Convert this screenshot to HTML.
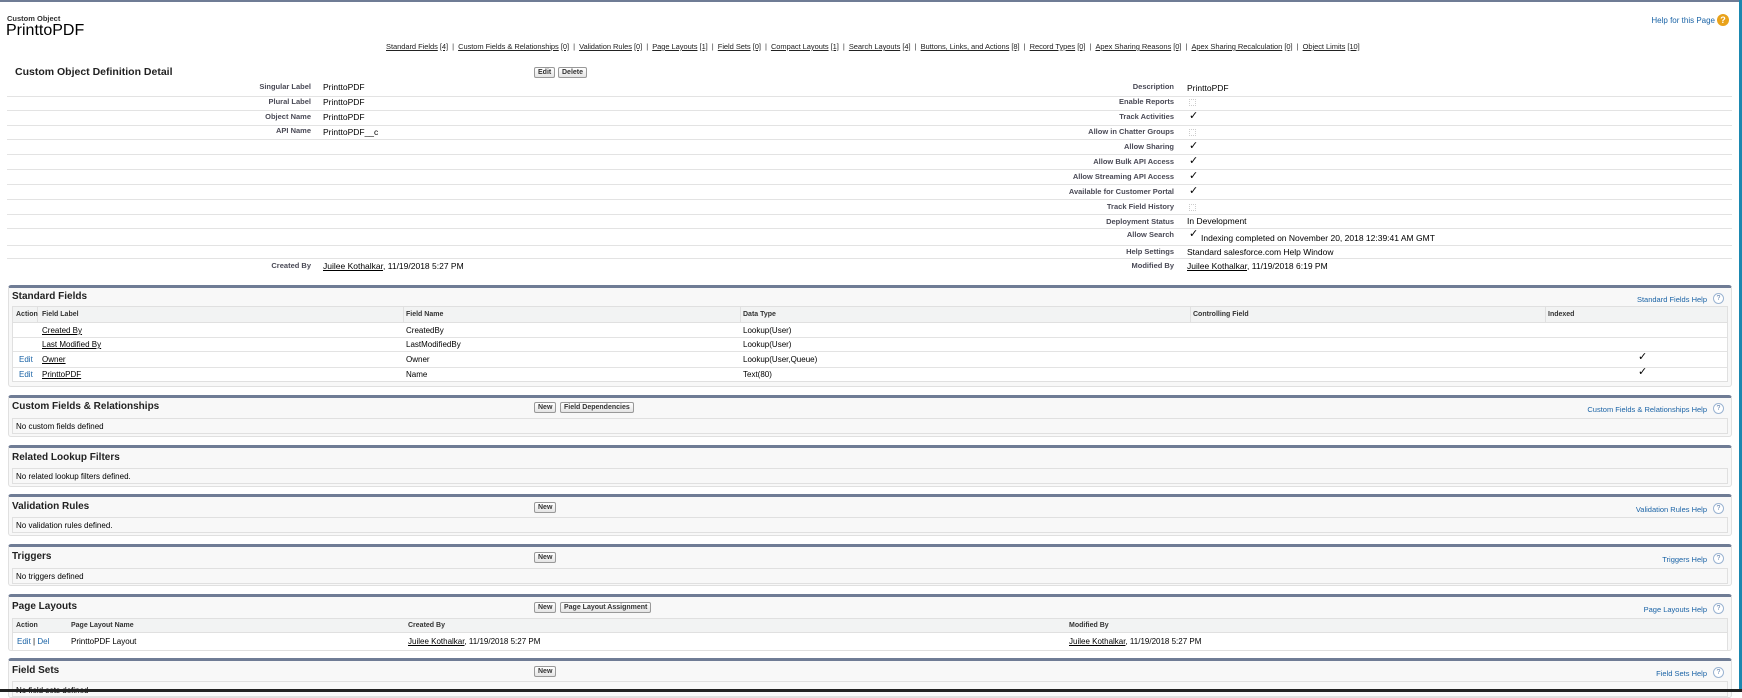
<!DOCTYPE html>
<html><head><meta charset="utf-8"><style>
*{margin:0;padding:0;box-sizing:border-box}
body{width:1742px;height:692px;position:relative;overflow:hidden;background:#fff;font-family:"Liberation Sans",Arial,sans-serif;color:#222;font-size:9px}
.a{position:absolute;white-space:nowrap}
.lbl{position:absolute;font-weight:bold;font-size:7.5px;color:#4a4a56;text-align:right;white-space:nowrap}
.val{position:absolute;font-size:8.5px;color:#000;white-space:nowrap}
.ln{position:absolute;height:1px;background:#e3e3e3}
u{text-decoration:underline}
.nav{position:absolute;top:42px;left:386px;font-size:7.5px;color:#333;white-space:nowrap;letter-spacing:-0.05px}
.nav u{color:#222}
.btn{position:absolute;height:11px;border:1px solid #999;border-radius:2px;background:linear-gradient(#fff,#e4e4e4);font-size:7px;font-weight:bold;color:#333;line-height:9px;padding:0 3px;white-space:nowrap}
.box{position:absolute;left:8px;width:1724px;background:#f8f8f8;border-top:3px solid #6f7c95;border-left:1px solid #e0e0e0;border-right:1px solid #e0e0e0;border-bottom:1px solid #e0e0e0;border-radius:3px}
.title{position:absolute;left:3px;font-weight:bold;font-size:10px;color:#222}
.help{position:absolute;right:24px;font-size:7.5px;color:#1a63a6;white-space:nowrap}
.q{position:absolute;right:7px;width:11px;height:11px;border-radius:50%;border:1px solid #9bb4d2;color:#5a7ba8;font-size:7px;text-align:center;line-height:9px;background:#fff}
.inner{position:absolute;left:3px;right:3px;background:#f8f8f8;border:1px solid #e0e0e0}
.th{position:absolute;font-weight:bold;font-size:7px;color:#333;white-space:nowrap}
.td{position:absolute;font-size:8px;color:#000;white-space:nowrap}
.lk{color:#1a63a6}
.ck{position:absolute;font-size:11px;line-height:11px;color:#000}
.cb{position:absolute;width:7px;height:7px;border:1px dotted #ccc}
</style></head><body>
<div class="a" style="left:0;top:0;width:1742px;height:2px;background:#6f7c95"></div>
<div class="a" style="left:1739px;top:0;width:3px;height:692px;background:#1b88b0"></div>

<div class="a" style="left:7px;top:14px;font-size:7.5px;font-weight:bold;color:#333">Custom Object</div>
<div class="a" style="left:6px;top:22px;font-size:16px;color:#000">PrinttoPDF</div>
<div class="a" style="right:27px;top:16px;font-size:8px;color:#1a63a6">Help for this Page</div>
<div class="a" style="left:1717px;top:14px;width:12px;height:12px;border-radius:50%;background:#e9a21a;color:#fff;font-size:9px;font-weight:bold;text-align:center;line-height:12px">?</div>

<div class="nav"><u>Standard Fields</u> <u>[4]</u> &nbsp;| &nbsp;<u>Custom Fields &amp; Relationships</u> <u>[0]</u> &nbsp;| &nbsp;<u>Validation Rules</u> <u>[0]</u> &nbsp;| &nbsp;<u>Page Layouts</u> <u>[1]</u> &nbsp;| &nbsp;<u>Field Sets</u> <u>[0]</u> &nbsp;| &nbsp;<u>Compact Layouts</u> <u>[1]</u> &nbsp;| &nbsp;<u>Search Layouts</u> <u>[4]</u> &nbsp;| &nbsp;<u>Buttons, Links, and Actions</u> <u>[8]</u> &nbsp;| &nbsp;<u>Record Types</u> <u>[0]</u> &nbsp;| &nbsp;<u>Apex Sharing Reasons</u> <u>[0]</u> &nbsp;| &nbsp;<u>Apex Sharing Recalculation</u> <u>[0]</u> &nbsp;| &nbsp;<u>Object Limits</u> <u>[10]</u></div>

<div class="a" style="left:15px;top:66px;font-size:10.5px;font-weight:bold;color:#222">Custom Object Definition Detail</div>
<div class="btn" style="left:534px;top:67px">Edit</div>
<div class="btn" style="left:558px;top:67px">Delete</div>

<div class="ln" style="left:7px;width:1725px;top:96px"></div>
<div class="ln" style="left:7px;width:1725px;top:110px"></div>
<div class="ln" style="left:7px;width:1725px;top:125px"></div>
<div class="ln" style="left:7px;width:1725px;top:139px"></div>
<div class="ln" style="left:7px;width:1725px;top:154px"></div>
<div class="ln" style="left:7px;width:1725px;top:169px"></div>
<div class="ln" style="left:7px;width:1725px;top:184px"></div>
<div class="ln" style="left:7px;width:1725px;top:199px"></div>
<div class="ln" style="left:7px;width:1725px;top:214px"></div>
<div class="ln" style="left:7px;width:1725px;top:228px"></div>
<div class="ln" style="left:7px;width:1725px;top:245px"></div>
<div class="ln" style="left:7px;width:1725px;top:258px"></div>

<div class="lbl" style="right:1431px;top:82px">Singular Label</div><div class="val" style="left:323px;top:82px">PrinttoPDF</div>
<div class="lbl" style="right:1431px;top:97px">Plural Label</div><div class="val" style="left:323px;top:97px">PrinttoPDF</div>
<div class="lbl" style="right:1431px;top:112px">Object Name</div><div class="val" style="left:323px;top:112px">PrinttoPDF</div>
<div class="lbl" style="right:1431px;top:126px">API Name</div><div class="val" style="left:323px;top:127px">PrinttoPDF__c</div>
<div class="lbl" style="right:1431px;top:261px">Created By</div><div class="val" style="left:323px;top:261px"><u>Juilee Kothalkar</u>, 11/19/2018 5:27 PM</div>

<div class="lbl" style="right:568px;top:82px">Description</div><div class="val" style="left:1187px;top:83px">PrinttoPDF</div>
<div class="lbl" style="right:568px;top:97px">Enable Reports</div><div class="cb" style="left:1189px;top:99px"></div>
<div class="lbl" style="right:568px;top:112px">Track Activities</div><div class="ck" style="left:1189px;top:111px">✓</div>
<div class="lbl" style="right:568px;top:127px">Allow in Chatter Groups</div><div class="cb" style="left:1189px;top:129px"></div>
<div class="lbl" style="right:568px;top:142px">Allow Sharing</div><div class="ck" style="left:1189px;top:141px">✓</div>
<div class="lbl" style="right:568px;top:157px">Allow Bulk API Access</div><div class="ck" style="left:1189px;top:156px">✓</div>
<div class="lbl" style="right:568px;top:172px">Allow Streaming API Access</div><div class="ck" style="left:1189px;top:171px">✓</div>
<div class="lbl" style="right:568px;top:187px">Available for Customer Portal</div><div class="ck" style="left:1189px;top:186px">✓</div>
<div class="lbl" style="right:568px;top:202px">Track Field History</div><div class="cb" style="left:1189px;top:204px"></div>
<div class="lbl" style="right:568px;top:217px">Deployment Status</div><div class="val" style="left:1187px;top:216px">In Development</div>
<div class="lbl" style="right:568px;top:230px">Allow Search</div><div class="ck" style="left:1189px;top:229px">✓</div><div class="val" style="left:1201px;top:233px">Indexing completed on November 20, 2018 12:39:41 AM GMT</div>
<div class="lbl" style="right:568px;top:247px">Help Settings</div><div class="val" style="left:1187px;top:247px">Standard salesforce.com Help Window</div>
<div class="lbl" style="right:568px;top:261px">Modified By</div><div class="val" style="left:1187px;top:261px"><u>Juilee Kothalkar</u>, 11/19/2018 6:19 PM</div>

<div class="box" style="top:285px;height:102px">
  <div class="title" style="top:3px">Standard Fields</div>
  <div class="help" style="top:7px">Standard Fields Help</div><div class="q" style="top:5px">?</div>
  <div class="a" style="left:3px;right:3px;top:18px;height:76px;background:#fff;border:1px solid #e0e0e0">
    <div class="a" style="left:0;right:0;top:0;height:16px;background:#f2f3f3;border-bottom:1px solid #e0e0e0"></div>
    <div class="a" style="left:0;right:0;top:30px;height:1px;background:#e3e3e3"></div>
    <div class="a" style="left:0;right:0;top:44px;height:1px;background:#e3e3e3"></div>
    <div class="a" style="left:0;right:0;top:60px;height:1px;background:#e3e3e3"></div>
    <div class="a" style="left:24px;top:0;width:1px;height:16px;background:#e0e0e0"></div>
    <div class="a" style="left:390px;top:0;width:1px;height:16px;background:#e0e0e0"></div>
    <div class="a" style="left:727px;top:0;width:1px;height:16px;background:#e0e0e0"></div>
    <div class="a" style="left:1177px;top:0;width:1px;height:16px;background:#e0e0e0"></div>
    <div class="a" style="left:1532px;top:0;width:1px;height:16px;background:#e0e0e0"></div>
    <div class="th" style="left:3px;top:4px">Action</div>
    <div class="th" style="left:29px;top:4px">Field Label</div>
    <div class="th" style="left:393px;top:4px">Field Name</div>
    <div class="th" style="left:730px;top:4px">Data Type</div>
    <div class="th" style="left:1180px;top:4px">Controlling Field</div>
    <div class="th" style="left:1535px;top:4px">Indexed</div>
    <div class="td" style="left:29px;top:19px"><u>Created By</u></div><div class="td" style="left:393px;top:19px">CreatedBy</div><div class="td" style="left:730px;top:19px">Lookup(User)</div>
    <div class="td" style="left:29px;top:33px"><u>Last Modified By</u></div><div class="td" style="left:393px;top:33px">LastModifiedBy</div><div class="td" style="left:730px;top:33px">Lookup(User)</div>
    <div class="td lk" style="left:6px;top:48px">Edit</div><div class="td" style="left:29px;top:48px"><u>Owner</u></div><div class="td" style="left:393px;top:48px">Owner</div><div class="td" style="left:730px;top:48px">Lookup(User,Queue)</div><div class="ck" style="left:1625px;top:45px">✓</div>
    <div class="td lk" style="left:6px;top:63px">Edit</div><div class="td" style="left:29px;top:63px"><u>PrinttoPDF</u></div><div class="td" style="left:393px;top:63px">Name</div><div class="td" style="left:730px;top:63px">Text(80)</div><div class="ck" style="left:1625px;top:60px">✓</div>
  </div>
</div>

<div class="box" style="top:395px;height:42px">
  <div class="title" style="top:3px">Custom Fields &amp; Relationships</div>
  <div class="btn" style="left:525px;top:4px">New</div><div class="btn" style="left:551px;top:4px">Field Dependencies</div>
  <div class="help" style="top:7px">Custom Fields &amp; Relationships Help</div><div class="q" style="top:5px">?</div>
  <div class="inner" style="top:20px;height:16px"><div class="td" style="left:3px;top:3px">No custom fields defined</div></div>
</div>

<div class="box" style="top:445px;height:42px">
  <div class="title" style="top:4px">Related Lookup Filters</div>
  <div class="inner" style="top:20px;height:16px"><div class="td" style="left:3px;top:3px">No related lookup filters defined.</div></div>
</div>

<div class="box" style="top:494px;height:42px">
  <div class="title" style="top:4px">Validation Rules</div>
  <div class="btn" style="left:525px;top:5px">New</div>
  <div class="help" style="top:8px">Validation Rules Help</div><div class="q" style="top:6px">?</div>
  <div class="inner" style="top:20px;height:16px"><div class="td" style="left:3px;top:3px">No validation rules defined.</div></div>
</div>

<div class="box" style="top:544px;height:42px">
  <div class="title" style="top:4px">Triggers</div>
  <div class="btn" style="left:525px;top:5px">New</div>
  <div class="help" style="top:8px">Triggers Help</div><div class="q" style="top:6px">?</div>
  <div class="inner" style="top:21px;height:16px"><div class="td" style="left:3px;top:3px">No triggers defined</div></div>
</div>

<div class="box" style="top:594px;height:57px">
  <div class="title" style="top:4px">Page Layouts</div>
  <div class="btn" style="left:525px;top:5px">New</div><div class="btn" style="left:551px;top:5px">Page Layout Assignment</div>
  <div class="help" style="top:8px">Page Layouts Help</div><div class="q" style="top:6px">?</div>
  <div class="a" style="left:3px;right:3px;top:21px;height:33px;background:#fff;border:1px solid #e0e0e0">
    <div class="a" style="left:0;right:0;top:0;height:14px;background:#f2f3f3;border-bottom:1px solid #e0e0e0"></div>
    <div class="th" style="left:3px;top:3px">Action</div>
    <div class="th" style="left:58px;top:3px">Page Layout Name</div>
    <div class="th" style="left:395px;top:3px">Created By</div>
    <div class="th" style="left:1056px;top:3px">Modified By</div>
    <div class="td" style="left:4px;top:18px"><span class="lk">Edit</span> | <span class="lk">Del</span></div>
    <div class="td" style="left:58px;top:18px">PrinttoPDF Layout</div>
    <div class="td" style="left:395px;top:18px"><u>Juilee Kothalkar</u>, 11/19/2018 5:27 PM</div>
    <div class="td" style="left:1056px;top:18px"><u>Juilee Kothalkar</u>, 11/19/2018 5:27 PM</div>
  </div>
</div>

<div class="box" style="top:658px;height:40px">
  <div class="title" style="top:4px">Field Sets</div>
  <div class="btn" style="left:525px;top:5px">New</div>
  <div class="help" style="top:8px">Field Sets Help</div><div class="q" style="top:6px">?</div>
  <div class="inner" style="top:20px;height:16px"><div class="td" style="left:3px;top:4px">No field sets defined</div></div>
</div>
<div class="a" style="left:0;top:689px;width:1742px;height:3px;background:#222"></div>
</body></html>
